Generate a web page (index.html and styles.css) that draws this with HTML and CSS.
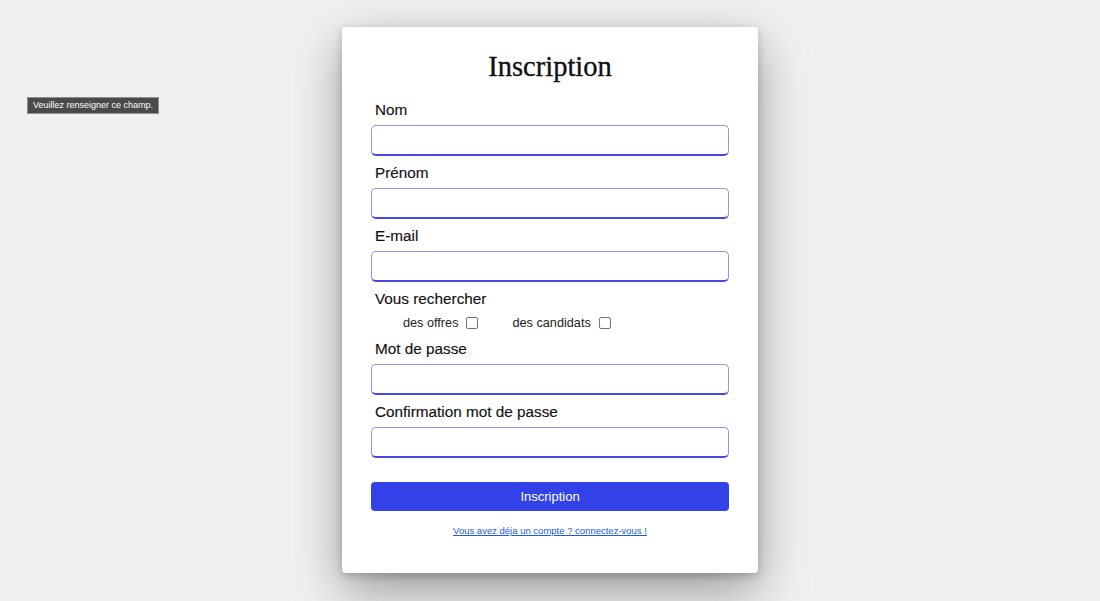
FILE: index.html
```html
<!DOCTYPE html>
<html lang="fr">
<head>
<meta charset="utf-8">
<title>Inscription</title>
<link rel="stylesheet" href="styles.css">
</head>
<body>
<div class="tooltip">Veuillez renseigner ce champ.</div>
<main class="card">
  <h1 class="title">Inscription</h1>
  <form class="form">
    <label class="label" for="nom">Nom</label>
    <input class="field" id="nom" type="text">
    <label class="label" for="prenom">Prénom</label>
    <input class="field" id="prenom" type="text">
    <label class="label" for="email">E-mail</label>
    <input class="field" id="email" type="email">
    <span class="label">Vous rechercher</span>
    <div class="choices">
      <label class="choice">des offres <span class="box"></span></label>
      <label class="choice">des candidats <span class="box"></span></label>
    </div>
    <label class="label" for="mdp">Mot de passe</label>
    <input class="field" id="mdp" type="password">
    <label class="label" for="mdp2">Confirmation mot de passe</label>
    <input class="field" id="mdp2" type="password">
    <button class="submit" type="button">Inscription</button>
    <a class="login" href="#">Vous avez déja un compte ? connectez-vous !</a>
  </form>
</main>
</body>
</html>
```
FILE: styles.css
```css
* { box-sizing: border-box; }
html, body { margin: 0; padding: 0; }
body {
  background: #f0f0f0;
  font-family: "Liberation Sans", Arial, sans-serif;
  height: 601px;
  overflow: hidden;
  position: relative;
}
.tooltip {
  position: absolute;
  left: 27px;
  top: 97px;
  width: 132px;
  height: 17px;
  background: #4a4a4a;
  border: 1px solid #8f8f8f;
  color: #fff;
  font-size: 9px;
  line-height: 15px;
  padding-left: 5px;
  white-space: nowrap;
}
.card {
  width: 416px;
  height: 546px;
  margin: 27px auto 0;
  background: #fff;
  border-radius: 4px;
  box-shadow: 0 18px 50px rgba(0,0,0,0.36), 0 3px 8px rgba(0,0,0,0.2);
  padding: 23px 29px 0;
}
.title {
  margin: 0 0 16px;
  font-family: "Liberation Serif", "Times New Roman", serif;
  font-weight: 400;
  font-size: 28.5px;
  line-height: 34px;
  text-align: center;
  color: #111;
  -webkit-text-stroke: 0.35px #111;
}
.form {
  display: flex;
  flex-direction: column;
}
.label {
  font-size: 15.3px;
  line-height: 20px;
  color: #111;
  padding-left: 4px;
  margin-bottom: 5px;
  -webkit-text-stroke: 0.15px #111;
}
.field {
  width: 358px;
  height: 31px;
  border: 1px solid #9191f7;
  border-bottom: 2px solid #4848e6;
  border-radius: 5px;
  margin: 0 0 7px;
  background: #fff;
  outline: none;
}
.choices {
  display: flex;
  gap: 34px;
  padding-left: 32px;
  height: 16px;
  margin: 1px 0 8px;
  align-items: center;
}
.choice {
  display: flex;
  align-items: center;
  gap: 8px;
  font-size: 12.7px;
  color: #222;
}
.box {
  width: 12px;
  height: 12px;
  border: 1px solid #767676;
  border-radius: 2px;
  background: #fff;
}
.submit {
  margin-top: 17px;
  width: 358px;
  height: 29px;
  border: none;
  border-radius: 4px;
  background: #3341e8;
  color: #fff;
  font-family: "Liberation Sans", Arial, sans-serif;
  font-size: 13px;
}
.login {
  margin-top: 14px;
  align-self: center;
  font-size: 9.5px;
  line-height: 12px;
  color: #1a5be6;
  text-decoration: underline;
}
```
